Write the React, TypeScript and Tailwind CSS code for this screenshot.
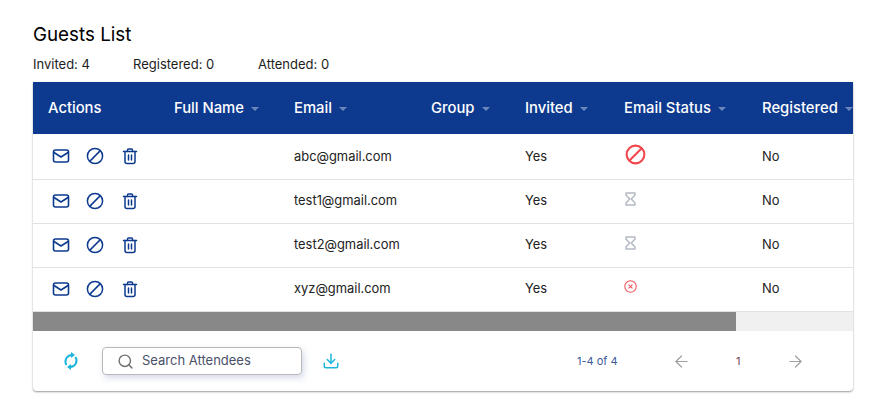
import { Download, Search, ArrowLeft, ArrowRight } from "lucide-react";

const FONT = "font-['Inter','Noto_Sans',sans-serif]";

const rows = [
  { email: "abc@gmail.com", status: "blocked" },
  { email: "test1@gmail.com", status: "pending" },
  { email: "test2@gmail.com", status: "pending" },
  { email: "xyz@gmail.com", status: "failed" },
];

const columns = [
  { label: "Actions", width: "w-[126px]", sort: false },
  { label: "Full Name", width: "w-[120px]", sort: true },
  { label: "Email", width: "w-[137px]", sort: true },
  { label: "Group", width: "w-[94px]", sort: true },
  { label: "Invited", width: "w-[99px]", sort: true },
  { label: "Email Status", width: "w-[138px]", sort: true },
  { label: "Registered", width: "w-[120px]", sort: true },
];

function MailIcon() {
  return (
    <svg width="18" height="18" viewBox="0 0 18 18" fill="none" stroke="#0d3a8f" strokeWidth="1.6" strokeLinejoin="round" strokeLinecap="round">
      <rect x="1.5" y="3" width="15" height="12" rx="2" />
      <path d="M2 5.5l7 4.5 7-4.5" />
    </svg>
  );
}

function BanIcon({ size, color, width }: { size: number; color: string; width: number }) {
  return (
    <svg width={size} height={size} viewBox="0 0 18 18" fill="none" stroke={color} strokeWidth={width}>
      <circle cx="9" cy="9" r="7.6" />
      <path d="M3.9 14.1L14.1 3.9" />
    </svg>
  );
}

function TrashIcon() {
  return (
    <svg width="18" height="18" viewBox="0 0 18 18" fill="none" stroke="#0d3a8f" strokeWidth="1.5" strokeLinecap="round" strokeLinejoin="round">
      <path d="M2.5 4.5h13" />
      <path d="M6.5 4.5V3a1 1 0 0 1 1-1h3a1 1 0 0 1 1 1v1.5" />
      <path d="M4 4.5v10a2 2 0 0 0 2 2h6a2 2 0 0 0 2-2v-10" />
      <path d="M7.5 8v5M10.5 8v5" />
    </svg>
  );
}

function HourglassIcon() {
  return (
    <svg width="11" height="14" viewBox="0 0 11 14" fill="none" stroke="#b4b9c4" strokeWidth="1.5" strokeLinejoin="round">
      <path d="M1 1h9v2L6.3 7l3.7 4v2H1v-2l3.7-4L1 3z" />
    </svg>
  );
}

function FailedIcon() {
  return (
    <svg width="13" height="13" viewBox="0 0 13 13" fill="none" stroke="#f0555b" strokeWidth="1.1">
      <circle cx="6.5" cy="6.5" r="5.7" />
      <path d="M4.6 4.6l3.8 3.8M8.4 4.6l-3.8 3.8" />
    </svg>
  );
}

function RefreshIcon() {
  return (
    <svg width="16" height="20" viewBox="0 0 16 20" fill="none" stroke="#1cb5dc" strokeWidth="2" className="ml-[30px]">
      <path d="M9 4A6.5 6.5 0 0 0 3.5 14" />
      <path d="M7 16A6.5 6.5 0 0 0 12.5 6" />
      <path d="M8 1l4 3-4 3zM8 13l-4 3 4 3z" fill="#1cb5dc" stroke="none" />
    </svg>
  );
}

export default function App() {
  return (
    <div className={`w-[880px] h-[405px] bg-white overflow-hidden pt-[24px] pl-[33px] ${FONT}`}>
      <h1 className="text-[18.8px] leading-[22px] text-black font-normal">Guests List</h1>
      <div className="flex h-[18px] mt-[9px] text-[13px] leading-[18px] text-[#1c1c1c]">
        <span className="w-[100px]">Invited: 4</span>
        <span className="w-[125px]">Registered: 0</span>
        <span>Attended: 0</span>
      </div>

      {/* Card */}
      <div className="w-[820px] mt-[9px] rounded-b bg-white shadow-[0_1px_2px_rgba(0,0,0,0.4)]">
        <div className="overflow-hidden">
          <div className="flex h-[52px] w-[834px] items-center bg-[#0d3a8f] text-[14.8px] font-medium text-white">
            {columns.map((c) => (
              <div key={c.label} className={`${c.width} shrink-0 pl-[15px] flex items-center`}>
                <span>{c.label}</span>
                {c.sort && <span className="ml-[7px] mt-[1px] w-0 h-0 border-x-[4px] border-x-transparent border-t-[4px] border-t-[#6c86bb]" />}
              </div>
            ))}
          </div>

          {rows.map((r, i) => (
            <div key={r.email} className={`flex w-[834px] ${i === 0 ? "h-[46px]" : "h-[44px]"} border-b border-[#e2e2e2] items-center text-[12.9px] text-[#222]`}>
              <div className="w-[126px] shrink-0 pl-[19px] flex items-center -mt-[1px]">
                <MailIcon />
                <span className="ml-[16px] flex"><BanIcon size={18} color="#0d3a8f" width={1.5} /></span>
                <span className="ml-[17px] flex"><TrashIcon /></span>
              </div>
              <div className="w-[120px] shrink-0" />
              <div className={`w-[137px] shrink-0 pl-[15px] ${i > 0 ? "-mt-[2px]" : ""}`}>{r.email}</div>
              <div className="w-[94px] shrink-0" />
              <div className={`w-[99px] shrink-0 pl-[15px] ${i > 0 ? "-mt-[2px]" : ""}`}>Yes</div>
              <div className={`w-[138px] shrink-0 pl-[15px] flex items-center ${r.status === "failed" ? "-mt-[6px]" : "-mt-[5px]"}`}>
                {r.status === "blocked" && <span className="ml-[1px]"><BanIcon size={21} color="#f0474d" width={1.8} /></span>}
                {r.status === "pending" && <span className="ml-[1px]"><HourglassIcon /></span>}
                {r.status === "failed" && <FailedIcon />}
              </div>
              <div className={`w-[120px] shrink-0 pl-[15px] ${i > 0 ? "-mt-[2px]" : ""}`}>No</div>
            </div>
          ))}
        </div>

        {/* Scrollbar */}
        <div className="h-[19px] bg-[#f0f0f0]">
          <div className="h-full w-[703px] bg-[#888888]" />
        </div>

        {/* Footer */}
        <div className="flex h-[60px] items-center">
          <RefreshIcon />
          <div className="ml-[23px] flex h-[28px] w-[200px] items-center rounded border border-[#b8b8b8] pl-[14px] shadow-[2px_3px_6px_rgba(90,110,170,0.25)]">
            <Search size={17} strokeWidth={2} className="text-[#707070]" />
            <span className="ml-[8px] text-[13px] text-[#4a4f6a]">Search Attendees</span>
          </div>
          <Download size={18} strokeWidth={2} className="ml-[20px] text-[#1cb5dc]" />
          <span className="ml-[237px] w-[40px] whitespace-nowrap text-[11px] text-[#3a5a9a]">1-4 of 4</span>
          <ArrowLeft size={19} strokeWidth={1.5} className="ml-[55px] text-[#a0a0a0]" />
          <span className="ml-[45px] w-[5px] text-[11px] text-[#7a3b5a]">1</span>
          <ArrowRight size={19} strokeWidth={1.5} className="ml-[45px] text-[#a0a0a0]" />
        </div>
      </div>
    </div>
  );
}
